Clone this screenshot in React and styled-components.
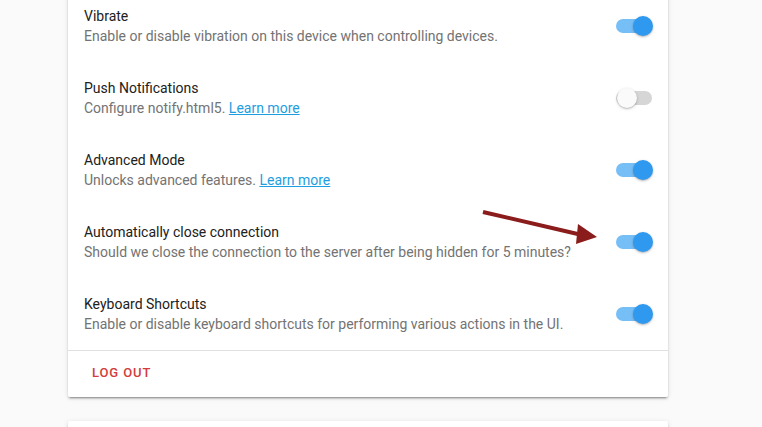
import React from "react";
import styled, { createGlobalStyle } from "styled-components";

const Global = createGlobalStyle`
  html, body { margin: 0; padding: 0; background: #fafafa; }
  body { font-family: Roboto, "Noto Sans", "Liberation Sans", sans-serif; overflow: hidden; }
`;

const Page = styled.div`
  position: relative;
  padding-left: 68px;
  margin-top: -10px;
  width: 600px;
`;

const Card = styled.div`
  background: #fff;
  border-radius: 2px;
  box-shadow: 0 2px 2px 0 rgba(0,0,0,0.14), 0 1px 5px 0 rgba(0,0,0,0.12), 0 3px 1px -2px rgba(0,0,0,0.2);
  margin-bottom: 24px;
  position: relative;
`;

const Row = styled.div`
  height: 72px;
  display: flex;
  align-items: center;
  justify-content: space-between;
  padding: 0 16px;
`;

const Body = styled.div`
  display: flex;
  flex-direction: column;
`;

const Title = styled.div`
  font-size: 14px;
  line-height: 20px;
  color: #212121;
`;

const Desc = styled.div`
  font-size: 14px;
  line-height: 20px;
  color: #737373;
`;

const Link = styled.a`
  color: #1e9ee0;
  text-decoration: underline;
`;

const Switch = styled.div`
  position: relative;
  width: 36px;
  height: 20px;
  flex: none;
`;

const Track = styled.div`
  position: absolute;
  left: 0;
  top: 3px;
  width: 36px;
  height: 14px;
  border-radius: 7px;
  background: ${(p) => (p.$on ? "#76bef6" : "#d6d6d6")};
`;

const Knob = styled.div`
  position: absolute;
  top: 0;
  left: ${(p) => (p.$on ? "17px" : "1px")};
  width: 20px;
  height: 20px;
  border-radius: 50%;
  background: ${(p) => (p.$on ? "#2f98ef" : "#fafafa")};
  box-shadow: 0 1px 3px rgba(0,0,0,0.22), 0 1px 1px rgba(0,0,0,0.1);
`;

const Actions = styled.div`
  border-top: 1px solid #e0e0e0;
  padding: 3px 16px 7px;
  height: 36px;
  display: flex;
  align-items: center;
`;

const Button = styled.button`
  border: none;
  background: none;
  padding: 0 8px;
  height: 36px;
  font-family: Roboto, "Liberation Sans", sans-serif;
  font-weight: 500;
  font-size: 13px;
  letter-spacing: 0.9px;
  color: #d23c3c;
  text-transform: uppercase;
`;

const NextCard = styled(Card)`
  height: 60px;
`;

const Arrow = styled.svg`
  position: absolute;
  left: 0;
  top: 0;
  pointer-events: none;
`;

const Toggle = ({ on }) => (
  <Switch>
    <Track $on={on} />
    <Knob $on={on} />
  </Switch>
);

const rows = [
  { title: "Vibrate", desc: "Enable or disable vibration on this device when controlling devices.", on: true },
  { title: "Push Notifications", desc: "Configure notify.html5. ", link: "Learn more", on: false },
  { title: "Advanced Mode", desc: "Unlocks advanced features. ", link: "Learn more", on: true },
  { title: "Automatically close connection", desc: "Should we close the connection to the server after being hidden for 5 minutes?", on: true },
  { title: "Keyboard Shortcuts", desc: "Enable or disable keyboard shortcuts for performing various actions in the UI.", on: true },
];

export default function App() {
  return (
    <>
      <Global />
      <Page>
        <Card>
          {rows.map((r) => (
            <Row key={r.title}>
              <Body>
                <Title>{r.title}</Title>
                <Desc>
                  {r.desc}
                  {r.link && <Link href="#">{r.link}</Link>}
                </Desc>
              </Body>
              <Toggle on={r.on} />
            </Row>
          ))}
          <Actions>
            <Button>Log out</Button>
          </Actions>
        </Card>
        <NextCard />
        <Arrow width="762" height="427" viewBox="0 -10 762 427">
          <line x1="483" y1="212" x2="582" y2="235" stroke="#8a1c1c" strokeWidth="4" />
          <polygon points="578,224 597,237 576,244" fill="#8a1c1c" />
        </Arrow>
      </Page>
    </>
  );
}
